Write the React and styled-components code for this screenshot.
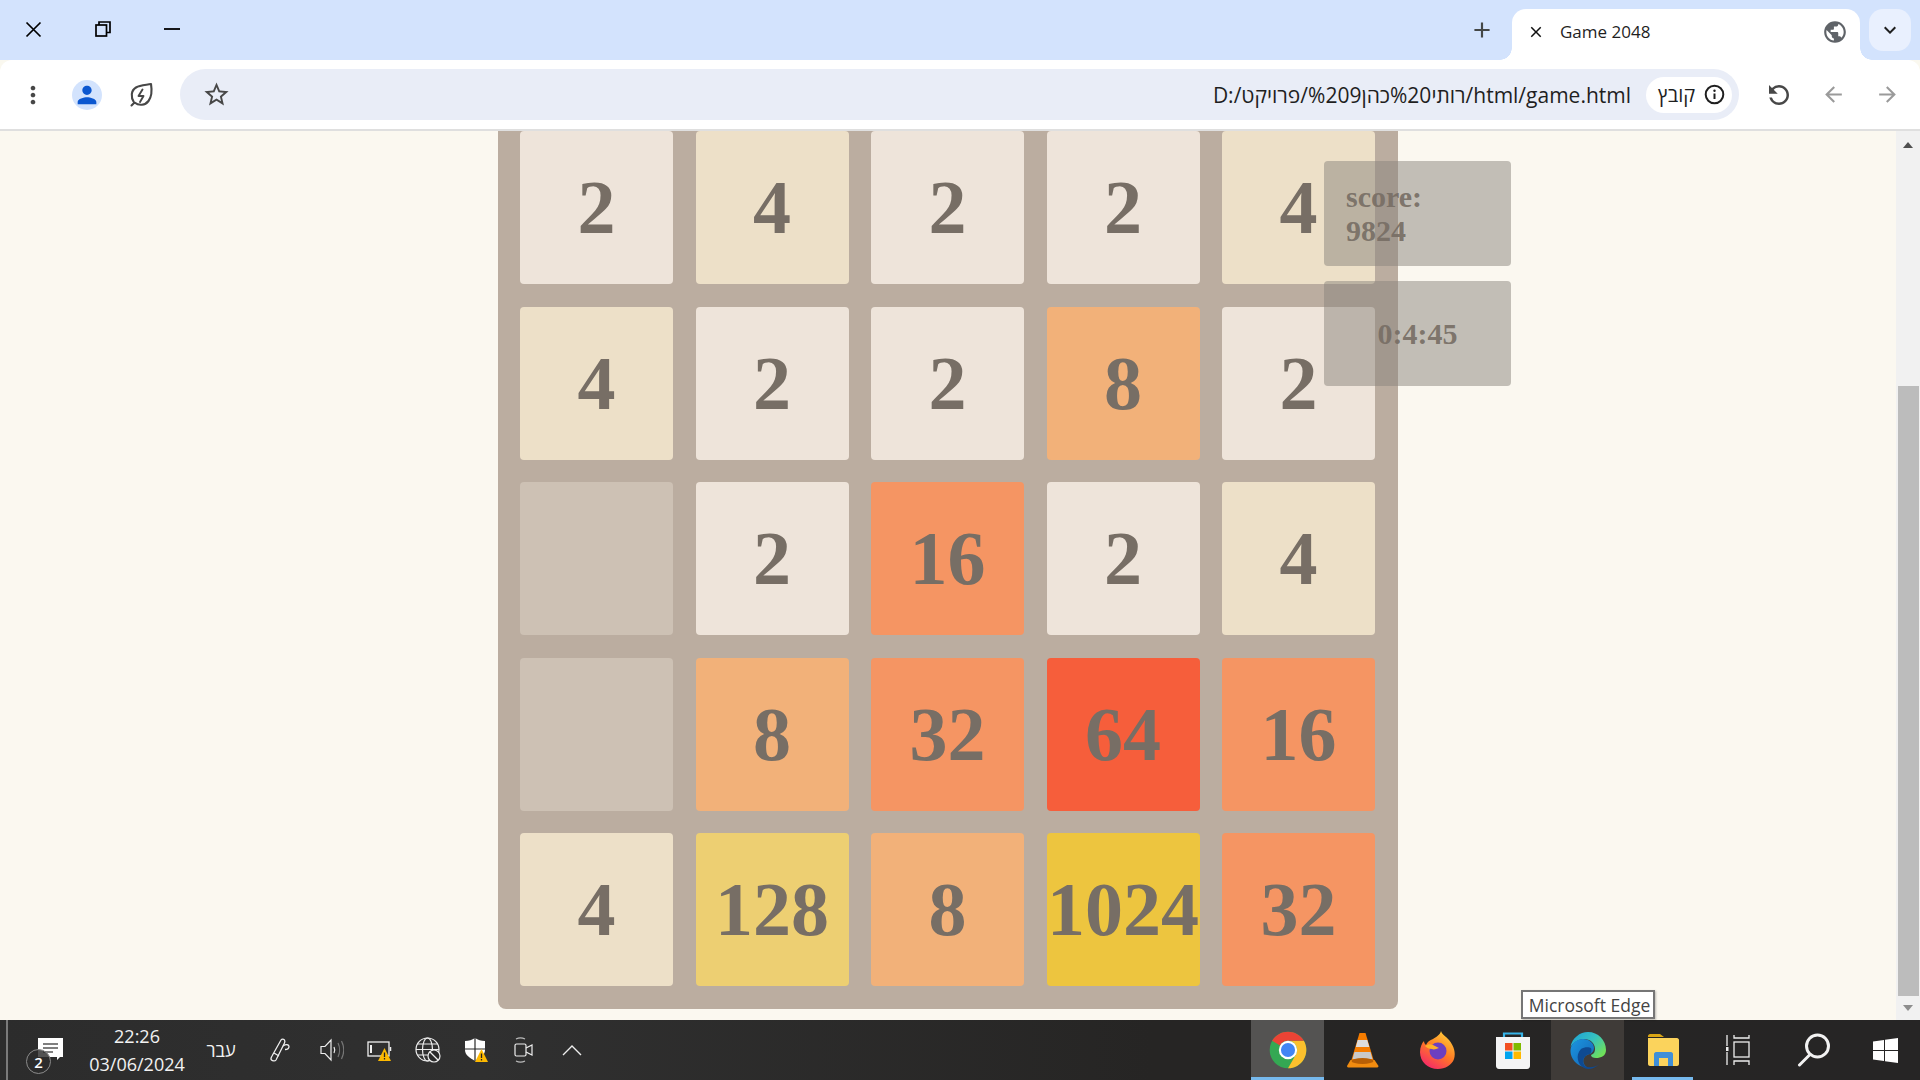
import React from "react";
import styled, { createGlobalStyle } from "styled-components";
import {
  MdMoreVert,
  MdPerson,
  MdOutlineStarBorder,
  MdRefresh,
  MdArrowBack,
  MdArrowForward,
  MdKeyboardArrowDown,
  MdAdd,
  MdClose,
  MdPublic,
} from "react-icons/md";

const GlobalStyle = createGlobalStyle`
  html, body {
    margin: 0;
    padding: 0;
    height: 100%;
    overflow: hidden;
  }
  * { box-sizing: border-box; }
`;

const Screen = styled.div`
  width: 1920px;
  height: 1080px;
  display: flex;
  flex-direction: column;
  font-family: "Open Sans", "Liberation Sans", sans-serif;
  background: #faf8ef;
`;

/* browser chrome */
const TitleBar = styled.div`
  height: 60px;
  flex: none;
  background: #d3e3fd;
  display: flex;
  align-items: flex-start;
`;

const WindowButtons = styled.div`
  display: flex;
  margin-left: -1px;
`;

const WindowButton = styled.div`
  width: 69px;
  height: 58px;
  display: flex;
  align-items: center;
  justify-content: center;
  color: #000;
`;

const NewTab = styled.div`
  margin-left: auto;
  width: 30px;
  height: 42px;
  margin-top: 9px;
  margin-right: 15px;
  display: flex;
  align-items: center;
  justify-content: center;
  color: #444746;
`;

const Tab = styled.div`
  position: relative;
  width: 348px;
  height: 51px;
  margin-top: 9px;
  background: #fff;
  border-radius: 14px 14px 0 0;
  display: flex;
  align-items: center;
  padding: 0 12px 6px 15px;
  color: #1f1f1f;
  font-size: 17px;

  &::before,
  &::after {
    content: "";
    position: absolute;
    bottom: 0;
    width: 12px;
    height: 12px;
  }
  &::before {
    left: -12px;
    background: radial-gradient(circle at 0 0, #d3e3fd 11.5px, #fff 12px);
  }
  &::after {
    right: -12px;
    background: radial-gradient(circle at 100% 0, #d3e3fd 11.5px, #fff 12px);
  }
`;

const TabClose = styled.span`
  display: flex;
  margin-right: 15px;
  color: #111;
`;

const TabGlobe = styled.span`
  display: flex;
  margin-left: auto;
  color: #5f6368;
`;

const TabList = styled.div`
  width: 42px;
  height: 42px;
  margin: 9px 9px 0;
  border-radius: 14px;
  background: #e9f0fe;
  display: flex;
  align-items: center;
  justify-content: center;
  color: #1f1f1f;
`;

const Toolbar = styled.div`
  height: 71px;
  flex: none;
  background: #fff;
  border-bottom: 2px solid #dfdfdf;
  border-radius: 12px 12px 0 0;
  display: flex;
  align-items: center;
  padding: 0 6px 0 6px;
`;

const ToolCell = styled.div`
  width: 54px;
  height: 54px;
  flex: none;
  display: flex;
  align-items: center;
  justify-content: center;
  color: ${(p) => (p.$muted ? "#9a9a9a" : "#474747")};
`;

const Avatar = styled.div`
  width: 30px;
  height: 30px;
  border-radius: 50%;
  background: #d3e3fd;
  color: #0b57d0;
  display: flex;
  align-items: center;
  justify-content: center;
`;

const Omnibox = styled.div`
  flex: 1;
  height: 51px;
  margin: 0 13px 0 12px;
  border-radius: 26px;
  background: #e9edf7;
  display: flex;
  align-items: center;
  padding: 0 7px 0 22px;
  color: #474747;
`;

const Url = styled.div`
  margin-left: auto;
  margin-right: 15px;
  font-size: 21px;
  color: #1f1f1f;
  white-space: nowrap;
  direction: ltr;
`;

const SiteChip = styled.div`
  width: 86px;
  height: 36px;
  border-radius: 18px;
  background: #fff;
  display: flex;
  align-items: center;
  justify-content: space-between;
  padding: 0 7px 0 12px;
  font-size: 20px;
  color: #1f1f1f;
`;

/* page */
const Viewport = styled.div`
  flex: 1;
  min-height: 0;
  display: flex;
  background: #fbf8f0;
  position: relative;
`;

const Page = styled.main`
  flex: 1;
  display: flex;
  justify-content: center;
  align-items: flex-start;
`;

const Board = styled.div`
  position: relative;
  width: 900px;
  padding: 0 23px 23px 22px;
  background: #bbada0;
  border-radius: 0 0 8px 8px;
  display: grid;
  grid-template-columns: repeat(5, 153px);
  grid-auto-rows: 153px;
  gap: 22.5px;
`;

const tileColors = {
  0: "#cdc1b4",
  2: "#eee4da",
  4: "#ede0c8",
  8: "#f2b179",
  16: "#f59563",
  32: "#f59563",
  64: "#f65e3b",
  128: "#edcf72",
  1024: "#edc53f",
};

const Tile = styled.div`
  border-radius: 4px;
  background: ${(p) => tileColors[p.$value]};
  display: flex;
  align-items: center;
  justify-content: center;
  font-family: "Liberation Serif", "Times New Roman", serif;
  font-weight: 700;
  font-size: 76px;
  color: #776e65;
`;

const SidePanels = styled.div`
  position: absolute;
  left: 826px;
  top: 30px;
  width: 187px;
  display: flex;
  flex-direction: column;
  gap: 15px;
`;

const Panel = styled.div`
  height: 105px;
  border-radius: 4px;
  background: rgba(137, 131, 124, 0.5);
  display: flex;
  flex-direction: column;
  justify-content: center;
  align-items: ${(p) => (p.$center ? "center" : "flex-start")};
  padding: ${(p) => (p.$center ? "0" : "0 22px")};
  font-family: "Liberation Serif", "Times New Roman", serif;
  font-weight: 700;
  font-size: 30px;
  color: rgba(119, 110, 101, 0.93);
`;

const Scrollbar = styled.div`
  width: 24px;
  flex: none;
  background: #f1f1f1;
  display: flex;
  flex-direction: column;
  align-items: center;
`;

const ScrollArrow = styled.div`
  height: ${(p) => p.$h}px;
  flex: none;
  width: 100%;
  display: flex;
  align-items: center;
  justify-content: center;

  &::before {
    content: "";
    border-left: 5.5px solid transparent;
    border-right: 5.5px solid transparent;
    ${(p) =>
      p.$down ? "border-top: 6px solid #8d8d8d;" : "border-bottom: 6px solid #505050;"}
  }
`;

const ScrollThumb = styled.div`
  flex: 1;
  width: 21px;
  margin-top: 227px;
  background: #bcbcbc;
`;

const Tooltip = styled.div`
  position: absolute;
  left: 1521px;
  bottom: 1px;
  width: 134px;
  height: 29px;
  background: #fff;
  border: 2px solid #767676;
  box-shadow: 1px 1px 2px rgba(0, 0, 0, 0.25);
  display: flex;
  align-items: center;
  justify-content: center;
  padding-left: 3px;
  font-size: 17.5px;
  color: #444;
  white-space: nowrap;
`;

/* windows taskbar */
const Taskbar = styled.footer`
  height: 60px;
  flex: none;
  display: flex;
  background: linear-gradient(90deg, #2c2c2c 0%, #303030 25%, #262524 60%, #262525 100%);
  color: #fff;
`;

const TrayArea = styled.div`
  flex: 1;
  display: flex;
  align-items: center;
  padding-left: 6px;
`;

const Divider = styled.div`
  width: 2px;
  height: 100%;
  background: #7a7a7a;
`;

const TrayCell = styled.div`
  position: relative;
  width: ${(p) => p.$w || 48}px;
  height: 100%;
  flex: none;
  display: flex;
  align-items: center;
  justify-content: center;
`;

const Clock = styled.div`
  width: 90px;
  flex: none;
  display: flex;
  flex-direction: column;
  align-items: center;
  font-size: 18px;
  line-height: 28px;
  white-space: nowrap;
  color: #f2f2f2;
`;

const Lang = styled.div`
  width: 70px;
  flex: none;
  text-align: center;
  font-size: 18px;
  padding-left: 8px;
  color: #f2f2f2;
`;

const Badge = styled.span`
  position: absolute;
  left: 18px;
  top: 29px;
  width: 25px;
  height: 25px;
  border-radius: 50%;
  border: 1.5px solid #8b8b8b;
  background: rgba(44, 44, 44, 0.82);
  display: flex;
  align-items: center;
  justify-content: center;
  font-size: 15px;
  font-weight: 600;
`;

const AppArea = styled.div`
  width: 669px;
  flex: none;
  display: flex;
  gap: 2px;
`;

const AppCell = styled.div`
  position: relative;
  width: ${(p) => p.$w || 73}px;
  height: 100%;
  flex: none;
  display: flex;
  align-items: center;
  justify-content: center;
  background: ${(p) => p.$bg || "transparent"};

  &::after {
    content: "";
    display: ${(p) => (p.$open ? "block" : "none")};
    position: absolute;
    left: ${(p) => (p.$open === "short" ? "6px" : "0")};
    right: ${(p) => (p.$open === "short" ? "6px" : "0")};
    bottom: 0;
    height: 3px;
    background: #76b9ed;
  }
`;

/* drawn icons */
const CloseGlyph = () => (
  <svg width="17" height="17" viewBox="0 0 17 17" fill="none" stroke="currentColor" strokeWidth="1.7">
    <path d="M1.5 1.5l14 14M15.5 1.5l-14 14" />
  </svg>
);

const RestoreGlyph = () => (
  <svg width="16" height="16" viewBox="0 0 16 16" fill="none" stroke="currentColor" strokeWidth="1.7">
    <rect x="1" y="4" width="10.5" height="11" />
    <path d="M4 4V1h11v10.5h-3.5" />
  </svg>
);

const MinimizeGlyph = () => (
  <svg width="16" height="4" viewBox="0 0 16 4" stroke="currentColor" strokeWidth="1.8">
    <path d="M0 2h16" />
  </svg>
);

const LeafIcon = () => (
  <svg width="26" height="26" viewBox="0 0 26 26" fill="none" stroke="currentColor" strokeWidth="2.1" strokeLinejoin="round" strokeLinecap="round">
    <path d="M3.5 23.5l2.5-2.5M6 20.5C2.5 15 3 8.5 8 5.5 12 3 18 3 23 2c1 6 .5 13-2.5 17-3.500 4.500-9.500 5-14 1.500z" />
    <path d="M14.500 7.500l-4 6.500h5l-3.500 6" strokeWidth="1.9" />
  </svg>
);

const InfoIcon = () => (
  <svg width="21" height="21" viewBox="0 0 21 21" fill="none" stroke="#1f1f1f">
    <circle cx="10.5" cy="10.5" r="8.8" strokeWidth="2" />
    <path d="M10.500 9.500v5.500" strokeWidth="2" />
    <circle cx="10.500" cy="6.700" r="1.200" fill="#1f1f1f" stroke="none" />
  </svg>
);

const ChatIcon = () => (
  <svg width="25" height="25" viewBox="0 0 25 25">
    <path d="M0 0h25v19h-3l-3 3v-3H0z" fill="#fff" />
    <path d="M5 6h15M5 10h15M5 14h10" stroke="#555" strokeWidth="1.3" />
  </svg>
);

const PenIcon = () => (
  <svg width="22" height="26" viewBox="0 0 22 26" fill="none" stroke="#eee" strokeWidth="1.3">
    <path d="M3 19L12 3c1-1.500 3-1 3.500 0s.5 2 0 3L7 23c-1 1.500-3.500 1-4.500 0S2 20.500 3 19z" />
    <path d="M14 9c3-2 6-1.500 6 .5s-2 3-4 3M5 16l5 3" />
  </svg>
);

const SpeakerIcon = () => (
  <svg width="24" height="24" viewBox="0 0 24 24" fill="none" stroke="#eee" strokeWidth="1.2">
    <path d="M1 8.500h4L11 2v20l-6-6.500H1z" />
    <path d="M14 9c1 2 1 4 0 6" />
    <path d="M18 5c2 4 2 10 0 14M21.500 3c3 6 3 12 0 18" stroke="#777" />
  </svg>
);

const WarnMark = ({ x, y }) => (
  <g transform={`translate(${x} ${y})`}>
    <path d="M6.500 0L13 13H0z" fill="#fdb900" stroke="none" />
    <path d="M6.500 4.500v4.500M6.500 10v1.500" stroke="#222" strokeWidth="1.300" />
  </g>
);

const BatteryIcon = () => (
  <svg width="26" height="24" viewBox="0 0 26 24" fill="none" stroke="#eee" strokeWidth="1.300">
    <rect x="1" y="4" width="21" height="14" />
    <path d="M4 7v8" strokeWidth="2" />
    <path d="M23.500 9v4" strokeWidth="1.500" />
    <WarnMark x="11" y="10" />
  </svg>
);

const GlobeBlockIcon = () => (
  <svg width="26" height="26" viewBox="0 0 26 26" fill="none" stroke="#eee" strokeWidth="1.200">
    <circle cx="12.500" cy="12.500" r="11.500" />
    <ellipse cx="12.500" cy="12.500" rx="5" ry="11.500" />
    <path d="M1 12.500h23M2.500 7h20M2.500 18h20" />
    <circle cx="19" cy="19" r="6" fill="#2a2a2a" />
    <path d="M15 15l8 8" />
  </svg>
);

const ShieldIcon = () => (
  <svg width="26" height="26" viewBox="0 0 26 26">
    <path d="M12 1c3 2 6 3 10 3v9c0 5-5 8-10 11C7 21 2 18 2 13V4c4 0 7-1 10-3z" fill="#fff" />
    <path d="M12 1v23M2 12h20" stroke="#2a2a2a" strokeWidth="1.200" />
    <WarnMark x="12" y="12" />
  </svg>
);

const MeetIcon = () => (
  <svg width="20" height="28" viewBox="0 0 20 28" fill="none" stroke="#eee" strokeWidth="1.200">
    <rect x="1" y="8" width="11" height="12" rx="1.500" />
    <path d="M12 12l6-3v10l-6-3" />
    <path d="M2 3c3-1.500 6-1.500 9 0M2 25c3 1.500 6 1.500 9 0" stroke="#bbb" />
  </svg>
);

const CaretIcon = () => (
  <svg width="20" height="12" viewBox="0 0 20 12" fill="none" stroke="#eee" strokeWidth="1.400">
    <path d="M1 11l9-9 9 9" />
  </svg>
);

const ChromeLogo = () => (
  <svg width="40" height="40" viewBox="0 0 48 48">
    <circle cx="24" cy="24" r="22" fill="#34a853" />
    <path d="M43.050 13A22 22 0 0 1 24 46l9.500-16.500A11 11 0 0 0 24 13z" fill="#fbc02d" />
    <path d="M4.950 13a22 22 0 0 1 38.100 0H24a11 11 0 0 0-9.500 5.500z" fill="#ea4335" />
    <circle cx="24" cy="24" r="11" fill="#fff" />
    <circle cx="24" cy="24" r="8.500" fill="#4285f4" />
  </svg>
);

const VlcLogo = () => (
  <svg width="32" height="36" viewBox="0 0 32 36">
    <path d="M12.500 1h6l9 30H3.500z" fill="#f57c00" />
    <path d="M10.700 8h9.600l2 7H8.800z" fill="#ddd" />
    <path d="M7.500 20h16l2 7H5.500z" fill="#c9c9c9" />
    <path d="M3.500 28h24l4 6c0 1-1 1.500-2 1.500H2c-1 0-2-.5-2-1.500z" fill="#f28c0f" />
    <ellipse cx="15.500" cy="29" rx="11" ry="3" fill="#b85f05" />
  </svg>
);

const FirefoxLogo = () => (
  <svg width="36" height="38" viewBox="0 0 36 38">
    <defs>
      <linearGradient id="ffBody" x1="0.800" y1="0" x2="0.200" y2="1">
        <stop offset="0" stopColor="#ffd23a" />
        <stop offset="0.500" stopColor="#ff7a24" />
        <stop offset="1" stopColor="#f5226e" />
      </linearGradient>
    </defs>
    <path d="M21 0c1 4 5 5 8 9 5 6 7 13 5 19-2 6-9 10-16 10C8 38 0 31 0 21c0-5 2-9 4-11 0 2 1 3 2 4 1-3 4-5 7-6 3-2 7-4 8-8z" fill="url(#ffBody)" />
    <circle cx="18" cy="20" r="8.500" fill="#6c3fc0" />
    <path d="M5 15c3-2 5-2 8-1l6 3c-3 1-5 2-7 1-3 0-5-1-7-3z" fill="#ffb02a" />
  </svg>
);

const StoreLogo = () => (
  <svg width="36" height="38" viewBox="0 0 36 38">
    <path d="M9 6V2.500h18V6" fill="none" stroke="#36b4e8" strokeWidth="2.200" />
    <path d="M1 6h34v29c0 1.500-1 3-3 3H4c-2 0-3-1.500-3-3z" fill="#f4f4f4" />
    <rect x="10" y="12" width="7.500" height="7.500" fill="#f25022" />
    <rect x="18.500" y="12" width="7.500" height="7.500" fill="#7fba00" />
    <rect x="10" y="20.500" width="7.500" height="7.500" fill="#00a4ef" />
    <rect x="18.500" y="20.500" width="7.500" height="7.500" fill="#ffb900" />
  </svg>
);

const EdgeLogo = () => (
  <svg width="36" height="38" viewBox="0 0 36 38">
    <defs>
      <linearGradient id="edgeTop" x1="0" y1="0" x2="1" y2="0.700">
        <stop offset="0" stopColor="#1c9fd8" />
        <stop offset="0.550" stopColor="#35c1c0" />
        <stop offset="1" stopColor="#6fe05a" />
      </linearGradient>
      <linearGradient id="edgeLow" x1="0" y1="0" x2="1" y2="1">
        <stop offset="0" stopColor="#1b96e0" />
        <stop offset="1" stopColor="#1463b4" />
      </linearGradient>
    </defs>
    <path d="M18 1c10 0 18 8 18 18 0 6-5 8-10 8-3 0-5-1-5-3 3-1 4-3 4-6 0-6-5-10-11-10S3 12 .5 16C2 7 10 1 18 1z" fill="url(#edgeTop)" />
    <path d="M.5 19C1 12 7 8 13 8c6 0 11 4 11 9 0 3-2 5-4 6-6 1-8 6-6 10 1 2 3 4 6 4C9 37 0 29 .5 19z" fill="url(#edgeLow)" />
    <path d="M11 18c3-2 8-2 10-1 1 2 0 5-1 6-6 1-9 7-5 12 3 2 9 2 15-2-4 3-8 5-12 5-3 0-9-3-10-9-1-4 0-8 3-11z" fill="#0e4a92" />
  </svg>
);

const FolderLogo = () => (
  <svg width="32" height="34" viewBox="0 0 32 34">
    <path d="M1 3c0-1 1-2 2-2h10l4 3H1z" fill="#d9a514" />
    <path d="M1 5h29c1 0 2 1 2 2v24c0 1-1 2-2 2H3c-1 0-2-1-2-2z" fill="#fbd35c" />
    <path d="M7 33V21c0-1 1-2 2-2h15c1 0 2 1 2 2v12h-5v-8h-9v8z" fill="#3f8fd8" />
  </svg>
);

const TaskViewIcon = () => (
  <svg width="26" height="30" viewBox="0 0 26 30" fill="none" stroke="#eee" strokeWidth="1.300">
    <path d="M1 0v11M1 17v13" />
    <rect x="0" y="12" width="2.500" height="4" fill="#eee" stroke="none" />
    <rect x="8" y="7" width="15" height="15" />
    <path d="M8 0v3h15V0M8 30v-4h15v4" />
  </svg>
);

const SearchIcon = () => (
  <svg width="34" height="34" viewBox="0 0 34 34" fill="none" stroke="#f2f2f2" strokeWidth="3">
    <circle cx="20.500" cy="13" r="11" />
    <path d="M13 21.500L2.500 32" strokeLinecap="round" />
  </svg>
);

const WindowsIcon = () => (
  <svg width="25" height="25" viewBox="0 0 25 25" fill="#fff">
    <path d="M0 3.500l11-1.500v10H0zM12 1.800L25 0v12H12zM0 13h11v10L0 21.500zM12 13h13v12l-13-1.800z" />
  </svg>
);

const board = [
  [2, 4, 2, 2, 4],
  [4, 2, 2, 8, 2],
  [0, 2, 16, 2, 4],
  [0, 8, 32, 64, 16],
  [4, 128, 8, 1024, 32],
];

export default function App() {
  return (
    <Screen>
      <GlobalStyle />
      <TitleBar>
        <WindowButtons>
          <WindowButton><CloseGlyph /></WindowButton>
          <WindowButton><RestoreGlyph /></WindowButton>
          <WindowButton><MinimizeGlyph /></WindowButton>
        </WindowButtons>
        <NewTab><MdAdd size={26} /></NewTab>
        <Tab>
          <TabClose><MdClose size={18} /></TabClose>
          Game 2048
          <TabGlobe><MdPublic size={26} /></TabGlobe>
        </Tab>
        <TabList><MdKeyboardArrowDown size={24} /></TabList>
      </TitleBar>

      <Toolbar>
        <ToolCell><MdMoreVert size={28} /></ToolCell>
        <ToolCell>
          <Avatar><MdPerson size={28} /></Avatar>
        </ToolCell>
        <ToolCell><LeafIcon /></ToolCell>
        <Omnibox>
          <MdOutlineStarBorder size={29} />
          <Url>
            D:/<bdi>פרויקט</bdi>/%209<bdi>כהן</bdi>%20<bdi>רותי</bdi>/html/game.html
          </Url>
          <SiteChip>
            <span>קובץ</span>
            <InfoIcon />
          </SiteChip>
        </Omnibox>
        <ToolCell><MdRefresh size={30} style={{ transform: "scaleX(-1)" }} /></ToolCell>
        <ToolCell $muted><MdArrowBack size={25} /></ToolCell>
        <ToolCell $muted><MdArrowForward size={25} /></ToolCell>
      </Toolbar>

      <Viewport>
        <Page>
          <Board>
            {board.flat().map((value, i) => (
              <Tile key={i} $value={value}>{value || ""}</Tile>
            ))}
            <SidePanels>
              <Panel>
                <span>score:</span>
                <span>9824</span>
              </Panel>
              <Panel $center>0:4:45</Panel>
            </SidePanels>
          </Board>
        </Page>
        <Scrollbar>
          <ScrollArrow $h={28} />
          <ScrollThumb />
          <ScrollArrow $h={24} $down />
        </Scrollbar>
        <Tooltip>Microsoft Edge</Tooltip>
      </Viewport>

      <Taskbar>
        <TrayArea>
          <Divider />
          <TrayCell $w={84}>
            <ChatIcon />
            <Badge>2</Badge>
          </TrayCell>
          <Clock>
            <span>22:26</span>
            <span>03/06/2024</span>
          </Clock>
          <Lang>עבר</Lang>
          <TrayCell $w={56}><PenIcon /></TrayCell>
          <TrayCell><SpeakerIcon /></TrayCell>
          <TrayCell><BatteryIcon /></TrayCell>
          <TrayCell><GlobeBlockIcon /></TrayCell>
          <TrayCell><ShieldIcon /></TrayCell>
          <TrayCell><MeetIcon /></TrayCell>
          <TrayCell><CaretIcon /></TrayCell>
        </TrayArea>
        <AppArea>
          <AppCell $bg="#545352" $open="full"><ChromeLogo /></AppCell>
          <AppCell><VlcLogo /></AppCell>
          <AppCell><FirefoxLogo /></AppCell>
          <AppCell><StoreLogo /></AppCell>
          <AppCell $bg="#3f3b38"><EdgeLogo /></AppCell>
          <AppCell $open="short"><FolderLogo /></AppCell>
          <AppCell $w={75}><TaskViewIcon /></AppCell>
          <AppCell $w={71}><SearchIcon /></AppCell>
          <AppCell $w={69}><WindowsIcon /></AppCell>
        </AppArea>
      </Taskbar>
    </Screen>
  );
}
